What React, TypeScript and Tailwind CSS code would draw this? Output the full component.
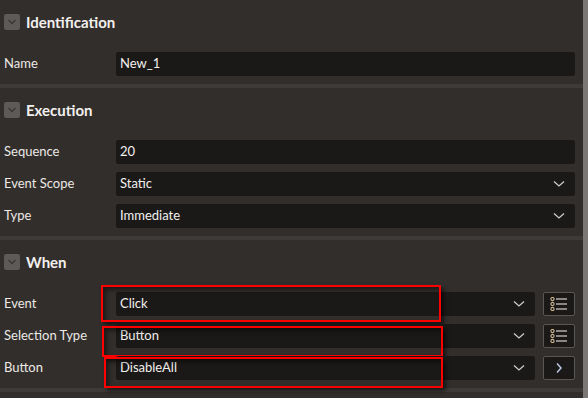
import React from "react";

const font = { fontFamily: 'Lato, "Open Sans", "Liberation Sans", sans-serif' };

function Chevron() {
  return (
    <svg width="12" height="8" viewBox="0 0 12 8" className="shrink-0">
      <path d="M1 1.5 L6 6 L11 1.5" fill="none" stroke="#cfcac6" strokeWidth="1.3" />
    </svg>
  );
}

function CollapseBox() {
  return (
    <div className="w-4 h-4 bg-[#5e5a57] rounded-[2px] flex items-center justify-center">
      <svg width="10" height="6" viewBox="0 0 10 6">
        <path d="M1.5 1 L5 4.5 L8.5 1" fill="none" stroke="#3a3633" strokeWidth="1.3" />
      </svg>
    </div>
  );
}

function ListIcon() {
  return (
    <svg width="18" height="14" viewBox="0 0 18 14">
      {[2, 7, 12].map((y) => (
        <g key={y}>
          <circle cx="2.5" cy={y} r="1.6" fill="none" stroke="#c9b48f" strokeWidth="1.1" />
          <line x1="6" y1={y} x2="17" y2={y} stroke="#e6e2de" strokeWidth="1.1" />
        </g>
      ))}
    </svg>
  );
}

function ArrowIcon() {
  return (
    <svg width="8" height="12" viewBox="0 0 8 12">
      <path d="M2 1.5 L6 6 L2 10.5" fill="none" stroke="#b8c6e0" strokeWidth="1.5" />
    </svg>
  );
}

function Header({ title }: { title: string }) {
  return (
    <div className="flex items-center gap-[6px] pl-1 pt-[14px] h-[30px]">
      <CollapseBox />
      <span className="text-[15px] font-bold text-[#f2f0ee] leading-none">{title}</span>
    </div>
  );
}

function Row({
  label,
  value,
  select,
  button,
  box,
}: {
  label: string;
  value: string;
  select?: boolean;
  button?: "list" | "arrow";
  box?: string;
}) {
  return (
    <div className="flex items-center h-6 pl-1 pr-2">
      <div className="w-[112px] text-[13px] text-[#ece9e6] shrink-0">{label}</div>
      <div className="flex-1 flex items-center gap-2 h-6 relative">
        <div className="flex-1 h-6 bg-[#1b1918] rounded-[2px] flex items-center pl-1 pr-[10px]">
          <span className="flex-1 text-[13px] text-[#f2f0ee]">{value}</span>
          {select && <Chevron />}
        </div>
        {button && (
          <div className="w-8 h-6 shrink-0 bg-[#1b1918] border border-[#5a5653] rounded-[2px] flex items-center justify-center">
            {button === "list" ? <ListIcon /> : <ArrowIcon />}
          </div>
        )}
        {box && (
          <div
            className={
              "absolute border-2 border-[#ff0000] shadow-[3px_3px_4px_rgba(0,0,0,0.55),inset_3px_3px_4px_rgba(0,0,0,0.45)] " +
              box
            }
          />
        )}
      </div>
    </div>
  );
}

function Separator() {
  return <div className="h-1 bg-[#3e3a37] mt-2" />;
}

export default function App() {
  return (
    <div className="w-[588px] h-[398px] bg-[#322e2b] flex overflow-hidden" style={font}>
      <div className="flex-1 flex flex-col">
        <Header title="Identification" />
        <div className="flex flex-col gap-2 mt-[22px]">
          <Row label="Name" value="New_1" />
        </div>
        <Separator />
        <Header title="Execution" />
        <div className="flex flex-col gap-2 mt-[22px]">
          <Row label="Sequence" value="20" />
          <Row label="Event Scope" value="Static" select />
          <Row label="Type" value="Immediate" select />
        </div>
        <Separator />
        <Header title="When" />
        <div className="flex flex-col gap-2 mt-[22px]">
          <Row
            label="Event"
            value="Click"
            select
            button="list"
            box="left-[-15px] top-[-7px] w-[340px] h-[37px]"
          />
          <Row
            label="Selection Type"
            value="Button"
            select
            button="list"
            box="left-[-14px] top-[2px] w-[341px] h-[31px]"
          />
          <Row
            label="Button"
            value="DisableAll"
            select
            button="arrow"
            box="left-[-12px] top-[1px] w-[339px] h-[31px]"
          />
        </div>
        <Separator />
      </div>
      <div className="w-[5px] bg-[#7b7774]" />
    </div>
  );
}
